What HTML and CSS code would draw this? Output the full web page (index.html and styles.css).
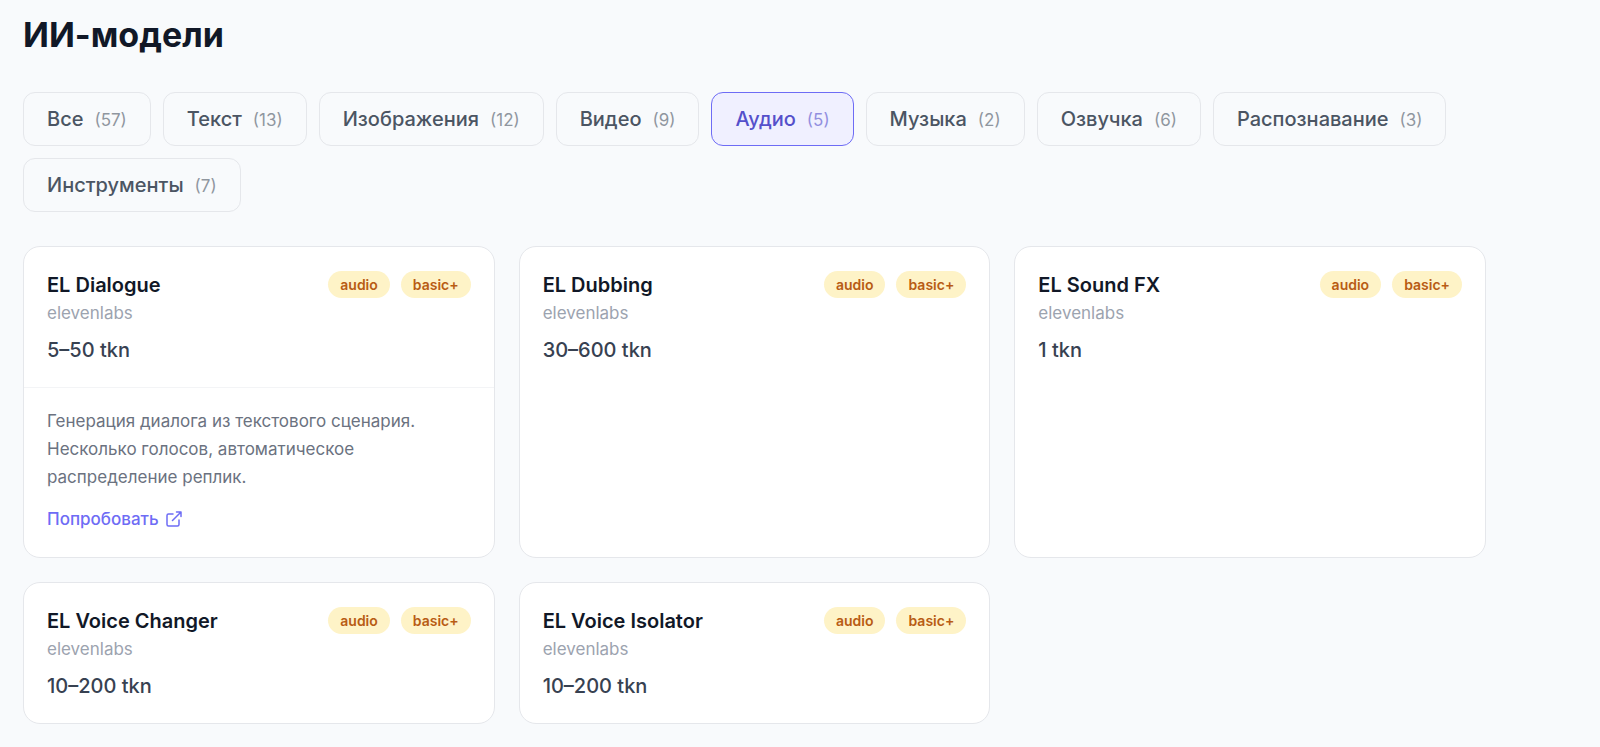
FILE: index.html
```
<!DOCTYPE html>
<html lang="ru">
<head>
<meta charset="UTF-8">
<meta name="viewport" content="width=device-width, initial-scale=1.0">
<title>ИИ-модели</title>
<link rel="stylesheet" href="styles.css">
</head>
<body>
    <main class="page">
        <h1>ИИ-модели</h1>

        <div class="filters">
            <button type="button" class="filter">Все <span class="count">(57)</span></button>
            <button type="button" class="filter">Текст <span class="count">(13)</span></button>
            <button type="button" class="filter">Изображения <span class="count">(12)</span></button>
            <button type="button" class="filter">Видео <span class="count">(9)</span></button>
            <button type="button" class="filter active" aria-pressed="true">Аудио <span class="count">(5)</span></button>
            <button type="button" class="filter">Музыка <span class="count">(2)</span></button>
            <button type="button" class="filter">Озвучка <span class="count">(6)</span></button>
            <button type="button" class="filter">Распознавание <span class="count">(3)</span></button>
            <button type="button" class="filter">Инструменты <span class="count">(7)</span></button>
        </div>

        <div class="models">
            <article class="card">
                <div class="card-main">
                    <div class="card-head">
                        <h2>EL Dialogue</h2>
                        <div class="badges"><span class="badge">audio</span><span class="badge">basic+</span></div>
                    </div>
                    <p class="provider">elevenlabs</p>
                    <p class="price">5–50 tkn</p>
                </div>
                <div class="card-details">
                    <p class="description">Генерация диалога из текстового сценария. Несколько голосов, автоматическое распределение реплик.</p>
                    <a class="try-link" href="#">Попробовать
                        <svg width="16" height="16" viewBox="0 0 16 16" fill="none" stroke="currentColor" stroke-width="1.5" stroke-linecap="round" stroke-linejoin="round" aria-hidden="true">
                            <path d="M7 3H2.5A1.5 1.5 0 0 0 1 4.5v9A1.5 1.5 0 0 0 2.5 15h9a1.5 1.5 0 0 0 1.5-1.5V9"/>
                            <path d="M10.5 1H15v4.5M15 1 6.5 9.5"/>
                        </svg>
                    </a>
                </div>
            </article>

            <article class="card">
                <div class="card-main">
                    <div class="card-head">
                        <h2>EL Dubbing</h2>
                        <div class="badges"><span class="badge">audio</span><span class="badge">basic+</span></div>
                    </div>
                    <p class="provider">elevenlabs</p>
                    <p class="price">30–600 tkn</p>
                </div>
            </article>

            <article class="card">
                <div class="card-main">
                    <div class="card-head">
                        <h2>EL Sound FX</h2>
                        <div class="badges"><span class="badge">audio</span><span class="badge">basic+</span></div>
                    </div>
                    <p class="provider">elevenlabs</p>
                    <p class="price">1 tkn</p>
                </div>
            </article>

            <article class="card">
                <div class="card-main">
                    <div class="card-head">
                        <h2>EL Voice Changer</h2>
                        <div class="badges"><span class="badge">audio</span><span class="badge">basic+</span></div>
                    </div>
                    <p class="provider">elevenlabs</p>
                    <p class="price">10–200 tkn</p>
                </div>
            </article>

            <article class="card">
                <div class="card-main">
                    <div class="card-head">
                        <h2>EL Voice Isolator</h2>
                        <div class="badges"><span class="badge">audio</span><span class="badge">basic+</span></div>
                    </div>
                    <p class="provider">elevenlabs</p>
                    <p class="price">10–200 tkn</p>
                </div>
            </article>
        </div>
    </main>
</body>
</html>
```

FILE: styles.css
```
* {
    box-sizing: border-box;
}

body {
    margin: 0;
    background-color: #f8fafc;
    color: #111827;
    font-family: Inter, sans-serif;
    font-size: 20px;
    line-height: 28px;
}

h1, h2, p {
    margin: 0;
}

.page {
    max-width: 1509px;
    padding: 15px 23px 24px;
}

h1 {
    margin-bottom: 37px;
    font-size: 34px;
    font-weight: 700;
    line-height: 40px;
}

.filters {
    display: flex;
    flex-wrap: wrap;
    gap: 12px;
    margin-bottom: 34px;
}

.filter {
    display: flex;
    align-items: baseline;
    gap: 11px;
    padding: 12px 23px;
    border: 1px solid #e5e7eb;
    border-radius: 12px;
    background: transparent;
    color: #4b5563;
    font-family: inherit;
    font-size: 20px;
    font-weight: 500;
    line-height: 28px;
    cursor: pointer;
}

.filter.active {
    border-color: #6e6cf5;
    background-color: #f0f0ff;
    color: #5550cb;
}

.count {
    font-size: 17px;
    font-weight: 400;
    line-height: 20px;
    opacity: 0.6;
}

.models {
    display: grid;
    grid-template-columns: repeat(3, 1fr);
    gap: 24px;
}

.card {
    border: 1px solid #e5e7eb;
    border-radius: 17px;
    background-color: #fff;
}

.card-main {
    padding: 24px 23px 23px;
}

.card-head {
    display: flex;
    align-items: flex-start;
    justify-content: space-between;
    gap: 12px;
}

h2 {
    font-size: 20px;
    font-weight: 600;
    line-height: 28px;
}

.badges {
    display: flex;
    gap: 11px;
}

.badge {
    padding: 0 12px;
    border-radius: 14px;
    background-color: #fef3c7;
    color: #b85c14;
    font-size: 14px;
    font-weight: 600;
    line-height: 27px;
}

.provider {
    color: #9ca3af;
    font-size: 17px;
}

.price {
    margin-top: 9px;
    color: #374151;
    font-weight: 500;
}

.card-details {
    padding: 19px 23px 24px;
    border-top: 1px solid #f3f4f6;
}

.description {
    margin-bottom: 13px;
    color: #6b7280;
    font-size: 17px;
}

.try-link {
    display: inline-flex;
    align-items: center;
    gap: 7px;
    color: #6e6cf5;
    font-size: 17px;
    font-weight: 500;
    text-decoration: none;
}
```
